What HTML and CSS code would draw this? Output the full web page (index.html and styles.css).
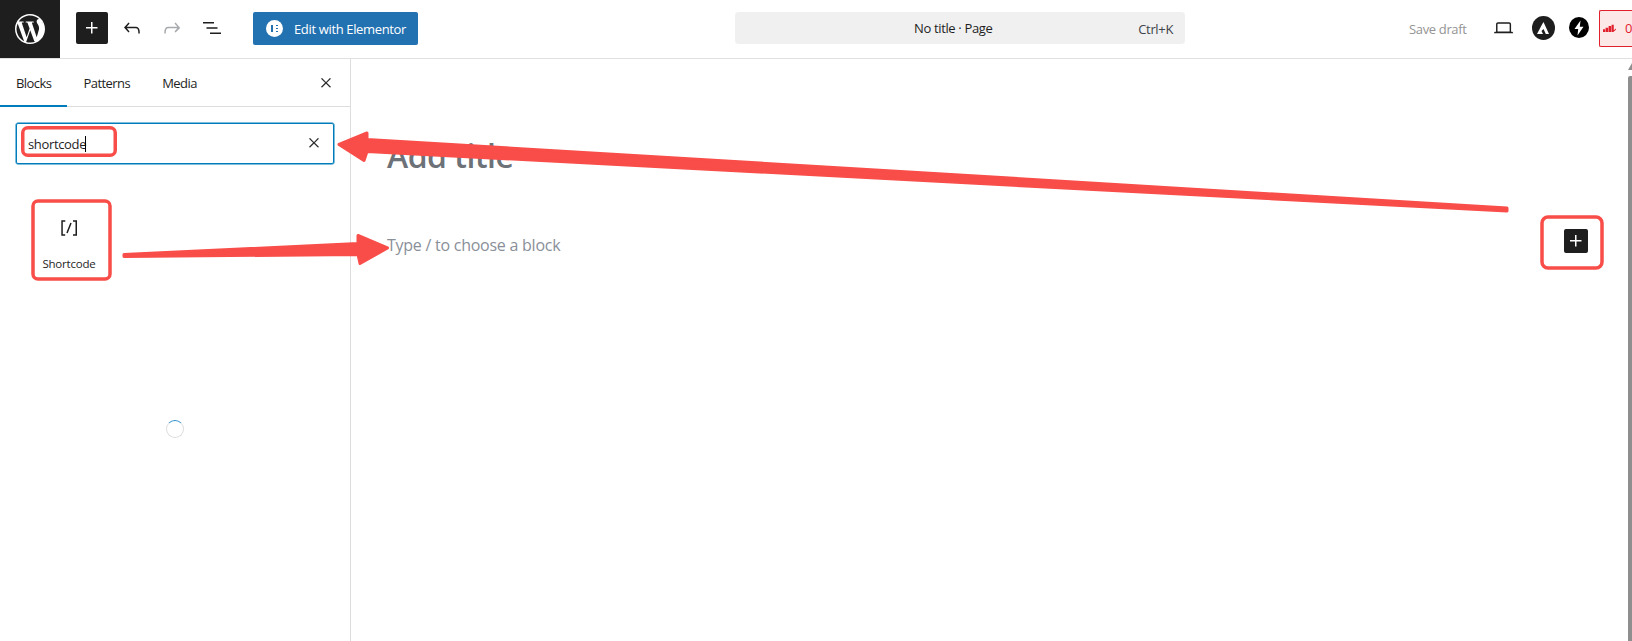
FILE: index.html
```html
<!DOCTYPE html>
<html lang="en">
<head>
<meta charset="utf-8">
<title>No title</title>
<link rel="stylesheet" href="styles.css">
</head>
<body>
<div class="app">
  <header class="topbar">
    <div class="wp-logo">
      <svg width="36" height="36" viewBox="0 0 24 24" fill="#fff"><path d="M12 2C6.49 2 2 6.49 2 12s4.49 10 10 10 10-4.49 10-10S17.510 2 12 2zM3.010 12c0-1.300.28-2.540.78-3.660l4.290 11.750C5.080 18.630 3.010 15.560 3.010 12zM12 20.990c-.88 0-1.730-.13-2.540-.37l2.700-7.840 2.760 7.570c.02.040.4.090.6.130-.93.330-1.940.51-2.980.51zm1.240-13.200c.54-.03 1.030-.09 1.030-.09.48-.06.43-.77-.06-.74 0 0-1.460.11-2.400.11-.88 0-2.370-.11-2.370-.11-.48-.03-.54.71-.06.74 0 0 .46.060.94.090l1.400 3.830-1.960 5.890-3.270-9.720c.54-.03 1.030-.09 1.030-.09.48-.06.43-.77-.06-.74 0 0-1.460.11-2.400.11-.17 0-.37 0-.58-.01C6.100 4.590 8.880 3.010 12 3.010c2.330 0 4.450.89 6.040 2.350-.04 0-.08-.01-.12-.01-.88 0-1.500.77-1.500 1.590 0 .74.43 1.370.88 2.100.34.600.74 1.370.74 2.480 0 .77-.3 1.660-.68 2.900l-.9 3-3.220-9.630zm3.280 12c2.680-1.560 4.470-4.460 4.470-7.790 0-1.570-.4-3.040-1.100-4.330.4.290.6.600.06.930 0 .91-.17 1.940-.68 3.220l-2.750 7.970z"/></svg>
    </div>
    <div class="tools">
      <button class="inserter"><svg width="24" height="24" viewBox="0 0 24 24"><path d="M11 12.500V17.500H12.500V12.500H17.500V11H12.500V6H11V11H6V12.500H11Z" fill="#fff"/></svg></button>
      <span class="tool"><svg width="24" height="24" viewBox="0 0 24 24"><path d="M18.300 11.700c-.6-.6-1.400-.9-2.300-.9H6.700l2.900-3.300-1.100-1-4.500 5L8.500 16.500l1-1-2.700-3.200H16c.5 0 .9.200 1.300.5 1 1 1 3.400 1 4.500v.3h1.500v-.2c0-1.500 0-4.300-1.500-5.700z" fill="#1e1e1e"/></svg></span>
      <span class="tool"><svg width="24" height="24" viewBox="0 0 24 24"><path d="M15.600 6.500l-1.100 1 2.900 3.300H8c-.9 0-1.700.3-2.300.9-1.400 1.500-1.400 4.200-1.400 5.600v.2h1.500v-.3c0-1.100 0-3.500 1-4.500.3-.3.700-.5 1.300-.5h9.200L14.500 15.500l1.100 1.100 4.600-4.600-4.600-5.500z" fill="#a7aaad"/></svg></span>
      <span class="tool"><svg width="24" height="24" viewBox="0 0 24 24"><path d="M3 6h11v1.500H3V6zm3.500 5.300h11v1.500h-11v-1.500zM10 16.500h11V18H10v-1.500z" fill="#1e1e1e"/></svg></span>
    </div>
    <button class="elementor">
      <span class="el-icon"><span class="el-mark"></span></span>
      <span>Edit with Elementor</span>
    </button>
    <div class="center-slot">
      <div class="command">
        <span class="command-title">No title · Page</span>
        <span class="command-key">Ctrl+K</span>
      </div>
    </div>
    <div class="right-tools">
      <span class="save">Save draft</span>
      <svg class="laptop" width="24" height="24" viewBox="0 0 24 24"><path d="M20.500 16h-.7V8c0-1.100-.9-2-2-2H6.200c-1.100 0-2 .9-2 2v8h-.7c-.8 0-1.500.7-1.500 1.500h20c0-.8-.7-1.500-1.500-1.500zM5.700 8c0-.3.200-.5.500-.5h11.600c.3 0 .5.200.5.500v7.600H5.700V8z" fill="#1e1e1e"/></svg>
      <span class="astra"><svg width="14" height="14" viewBox="0 0 14 14"><path d="M7.500 1 L13 13 H9.800 L7.500 8 L5.500 10 L7 13 H1 L6 3.500 Z" fill="#fff"/></svg></span>
      <span class="bolt"><svg width="14" height="16" viewBox="0 0 14 16"><path d="M8.500 0.500 L2.500 9 H6.200 L5.500 15.500 L11.500 6.800 H7.800 Z" fill="#fff"/></svg></span>
      <span class="score"><svg width="15" height="9" viewBox="0 0 15 9"><path d="M0 5.500h2.500v3H0zM3 3.500h3v5H3zM6.500 1.500H9.500v7h-3zM10 0h2.500v6.500L15 4.500v1.500l-3 2.500H10z" fill="#e2202d"/></svg><span class="score-num">0</span></span>
    </div>
  </header>
  <div class="body">
    <aside class="sidebar">
      <div class="tabs">
        <span class="tab active">Blocks</span>
        <span class="tab">Patterns</span>
        <span class="tab">Media</span>
        <svg class="tabs-close" width="24" height="24" viewBox="0 0 24 24"><path d="M13 11.800l5.800-5.800-1.100-1-5.700 5.800L6.200 5l-1 1 5.700 5.800-5.800 5.700 1.100 1 5.800-5.700 5.700 5.700 1.100-1z" fill="#1e1e1e" stroke="#1e1e1e" stroke-width=".3" transform="translate(3.600 3.600) scale(.7)"/></svg>
      </div>
      <div class="search">
        <span class="search-text">shortcode</span><span class="caret"></span>
        <svg class="search-clear" width="24" height="24" viewBox="0 0 24 24"><path d="M13 11.800l5.800-5.800-1.100-1-5.700 5.800L6.200 5l-1 1 5.700 5.800-5.800 5.700 1.100 1 5.800-5.700 5.700 5.700 1.100-1z" fill="#1e1e1e" stroke="#1e1e1e" stroke-width=".3" transform="translate(3.600 3.600) scale(.7)"/></svg>
      </div>
      <div class="block-item">
        <svg class="block-icon" width="24" height="24" viewBox="0 0 24 24"><path d="M16 4.200v1.500h2.500v12.500H16v1.500h4V4.200h-4zM4.200 19.800h4v-1.500H5.800V5.800h2.500V4.200h-4v15.600zm5.100-3.100l1.400.6 4-10-1.400-.6-4 10z" fill="#1e1e1e"/></svg>
        <span class="block-label">Shortcode</span>
      </div>
      <div class="spinner-row"><span class="spinner"></span></div>
    </aside>
    <main class="canvas">
      <h1 class="post-title">Add title</h1>
      <div class="appender">
        <span class="placeholder">Type / to choose a block</span>
        <span class="mini-plus"><svg width="24" height="24" viewBox="0 0 24 24"><path d="M11 12.500V17.500H12.500V12.500H17.500V11H12.500V6H11V11H6V12.500H11Z" fill="#fff"/></svg></span>
      </div>
    </main>
    <div class="scrollbar"><span class="scroll-arrow"></span><span class="scroll-thumb"></span></div>
  </div>
  <svg class="marks" width="1632" height="641" viewBox="0 0 1632 641" fill="none">
    <g fill="#f84d48" stroke="#f84d48" stroke-linejoin="round" stroke-width="3">
      <path d="M1507 208 L367 139.500 L367 133 L339 144.500 L364 160.500 L367 151.500 L1507 211 Z"/>
      <path d="M124 254.500 L358 243.500 L358 235.500 L387.500 248 L360 263.500 L358 254.500 L124 256.500 Z"/>
    </g>
    <g stroke="#f84d48" stroke-width="3.500" fill="none">
      <rect x="22.750" y="127.750" width="92.500" height="27.500" rx="5"/>
      <rect x="33" y="201" width="77" height="78" rx="5"/>
      <rect x="1542" y="217" width="60" height="51" rx="6"/>
    </g>
  </svg>
</div>
</body>
</html>
```
FILE: styles.css
```css
* { box-sizing: border-box; }
html, body { margin: 0; height: 100%; overflow: hidden; background: #fff; }
body { font-family: "Open Sans", "Noto Sans", sans-serif; font-size: 13px; letter-spacing: -.35px; color: #1e1e1e; }
button { border: 0; font: inherit; letter-spacing: inherit; padding: 0; margin: 0; }
svg { display: block; }
.app { position: relative; width: 1632px; height: 641px; display: flex; flex-direction: column; }
.topbar { height: 59px; display: flex; align-items: center; border-bottom: 1px solid #e0e0e0; flex: none; }
.wp-logo { width: 60px; height: 58px; background: #1e1e1e; display: flex; align-items: center; justify-content: center; }
.tools { display: flex; align-items: center; margin: 0 0 2px 16px; gap: 8px; }
.inserter { width: 32px; height: 32px; background: #1e1e1e; border-radius: 2px; display: flex; align-items: center; justify-content: center; }
.tool { width: 32px; height: 32px; display: flex; align-items: center; justify-content: center; }
.elementor { margin: 0 0 1px 25px; width: 165px; height: 33px; background: #2271b1; border-radius: 2px; color: #fff; display: flex; align-items: center; gap: 11px; padding-left: 13px; font-size: 13px; }
.el-icon { width: 17px; height: 17px; border-radius: 50%; background: #fff; display: flex; align-items: center; justify-content: center; }
.el-mark { width: 7px; height: 7px; border-left: 2px solid #2271b1; background: repeating-linear-gradient(#2271b1 0 1.400px, transparent 1.400px 2.800px) 3px 0 no-repeat; }
.center-slot { flex: 1; display: flex; padding-left: 317px; margin-bottom: 2px; }
.command { width: 450px; height: 32px; background: #f0f0f0; border-radius: 4px; display: flex; align-items: center; position: relative; padding-right: 12px; justify-content: flex-end; }
.command-title { position: absolute; left: 179px; }
.command-key { color: #3c434a; padding-top: 2px; }
.right-tools { display: flex; align-items: center; width: 223px; flex: none; margin-bottom: 2px; }
.save { color: #949494; width: 58px; white-space: nowrap; padding-top: 2px; }
.laptop { margin-left: 25px; }
.astra { margin-left: 17px; width: 24px; height: 24px; background: #1e1e1e; border-radius: 50%; display: flex; align-items: center; justify-content: center; }
.bolt { margin: 0 0 1px 14px; width: 21px; height: 21px; background: #000; border-radius: 50%; display: flex; align-items: center; justify-content: center; }
.score { margin-left: 10px; width: 33px; height: 37px; background: #fde8e8; border: 1px solid #e2202d; border-right: 0; border-radius: 2px 0 0 2px; display: flex; align-items: center; padding-left: 3px; gap: 9px; color: #e2202d; overflow: hidden; flex: none; }
.body { flex: 1; display: flex; min-height: 0; }
.sidebar { width: 351px; border-right: 1px solid #ddd; flex: none; display: flex; flex-direction: column; }
.tabs { height: 48px; border-bottom: 1px solid #ddd; display: flex; align-items: center; position: relative; flex: none; letter-spacing: -.55px; }
.tab { height: 48px; display: flex; align-items: center; padding: 0 16px; }
.tab.active { box-shadow: inset 0 -2px 0 #007cba; }
.tabs-close { position: absolute; left: 314px; top: 12px; }
.search { margin: 16px 16px 0; height: 41px; border: 1px solid #007cba; box-shadow: 0 0 0 .5px #007cba; border-radius: 2px; display: flex; align-items: center; padding-left: 11px; position: relative; flex: none; }
.search-text { font-size: 13px; }
.caret { width: 1px; height: 16px; background: #000; margin-left: -1px; }
.search-clear { position: absolute; right: 7px; top: 7px; }
.block-item { margin: 36px 0 0 32px; width: 79px; height: 81px; display: flex; flex-direction: column; align-items: center; padding: 16px 5px 0 0; flex: none; }
.block-label { font-size: 11.500px; margin-top: 16px; line-height: 15px; letter-spacing: -.2px; }
.spinner-row { padding: 139px 0 0 166px; }
.spinner { display: block; width: 18px; height: 18px; border-radius: 50%; border: 1.500px solid #ddd; border-top-color: #2a8ec9; }
.canvas { flex: 1; padding: 0 0 0 36px; min-width: 0; }
.post-title { margin: 75px 0 0; font-size: 32px; line-height: 44px; font-weight: 600; letter-spacing: -.5px; color: #6d7178; }
.appender { margin-top: 49px; height: 28px; display: flex; align-items: center; position: relative; padding-right: 40px; justify-content: space-between; }
.placeholder { font-size: 16px; letter-spacing: -.25px; color: #8a8f99; padding-top: 8px; }
.mini-plus { width: 24px; height: 24px; background: #1e1e1e; border-radius: 2px; display: flex; align-items: center; justify-content: center; }
.scrollbar { width: 4px; flex: none; padding-top: 4px; display: flex; flex-direction: column; gap: 6px; }
.scroll-arrow { width: 0; height: 0; border-left: 4px solid transparent; border-bottom: 7px solid #8f8f8f; flex: none; }
.scroll-thumb { flex: 1; background: #8f8f8f; border-radius: 2px 0 0 0; }
.marks { position: absolute; left: 0; top: 0; pointer-events: none; }
```
